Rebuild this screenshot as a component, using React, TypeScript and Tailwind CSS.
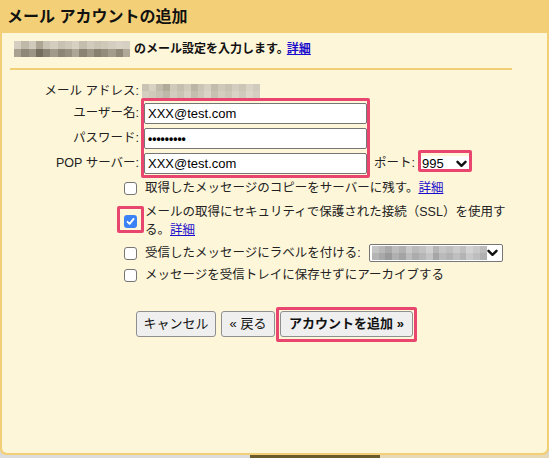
import React from 'react';

const FONT = { fontFamily: '"Liberation Sans", "Noto Sans CJK JP", sans-serif' };

// pixelated (mosaic) placeholder for redacted text
const Mosaic: React.FC<{ top: string[]; bottom: string[]; cell?: number; className?: string }> = ({
  top,
  bottom,
  cell = 8,
  className = '',
}) => (
  <div className={`flex flex-col ${className}`}>
    {[top, bottom].map((row, r) => (
      <div key={r} className="flex">
        {row.map((c, i) => (
          <span key={i} style={{ background: c, width: cell, height: cell }} />
        ))}
      </div>
    ))}
  </div>
);

const Chevron: React.FC = () => (
  <svg width="11" height="8" viewBox="0 0 11 8" className="shrink-0">
    <polyline points="1.5,1.8 5.5,5.8 9.5,1.8" fill="none" stroke="#111" strokeWidth="2.4" strokeLinecap="round" strokeLinejoin="round" />
  </svg>
);

const Box: React.FC<{ checked?: boolean }> = ({ checked }) =>
  checked ? (
    <span className="flex h-[13px] w-[13px] shrink-0 items-center justify-center rounded-[3px] bg-[#3b82f6]">
      <svg width="9" height="9" viewBox="0 0 9 9">
        <polyline points="1.5,4.8 3.6,6.9 7.6,1.9" fill="none" stroke="#fff" strokeWidth="1.8" strokeLinecap="round" strokeLinejoin="round" />
      </svg>
    </span>
  ) : (
    <span className="h-[13px] w-[13px] shrink-0 rounded-[3px] border border-[#767676] bg-white" />
  );

const Field: React.FC<{ value: string; small?: boolean }> = ({ value, small }) => (
  <div className="flex h-[21px] w-[223px] items-center rounded-[2px] border border-[#767676] bg-white pl-[3px] text-[13px] text-black">
    {small ? <span className="text-[12px] font-bold">{value}</span> : value}
  </div>
);

const Link: React.FC = () => <a className="text-[#1a0dcd] underline">詳細</a>;

export default function App() {
  return (
    <div className="relative h-[458px] w-[549px] overflow-hidden bg-[#d9d9d9] text-[#222]" style={FONT}>
      <div className="flex h-[455px] flex-col rounded-b-[6px] bg-[#f3d077] px-[2px] pb-[2px]">
        <div className="flex h-[33px] shrink-0 items-center pl-[5px] pt-[1px] text-[16px] font-bold text-[#111]">
          メール アカウントの追加
        </div>

        <div className="flex-1 rounded-b-[5px] bg-[#fef6d9]">
          <div className="mt-[8px] flex h-[16px] items-center pl-[12px] text-[12px] font-bold text-[#111]">
            <Mosaic
              className="w-[116px] overflow-hidden"
              top={['#d4cfc0', '#bfb9aa', '#cfcabb', '#aca593', '#c8c3b3', '#d2cdbe', '#c6c1b1', '#cdc8b9', '#d6d1c2', '#c3bead', '#d0cbbc', '#c9c4b4', '#cdc8b8', '#d3cebf', '#d8d3c4', '#d5d0c1']}
              bottom={['#a9a292', '#8f8878', '#9c9585', '#756e5e', '#8b8474', '#a19a8a', '#8d8676', '#979080', '#ada696', '#8a8373', '#9d9686', '#877f70', '#938c7c', '#a39c8c', '#8f8878', '#b0a999']}
            />
            <span className="ml-[4px]">のメール設定を入力します。</span>
            <span className="ml-[-2px]">
              <Link />
            </span>
          </div>
          <div className="ml-[8px] mt-[11px] h-[2px] w-[502px] bg-[#f1cf74]" />

          <div className="mt-[12px] text-[12.5px]">
            <div className="flex h-[18px] items-center">
              <div className="w-[138px] pr-[1px] text-right">メール アドレス:</div>
              <Mosaic
                className="ml-[2px] w-[118px] overflow-hidden"
                cell={7}
                top={['#c9c3b3', '#d7d2c4', '#c1bbab', '#b0aa99', '#cfcaba', '#c4bfaf', '#d0cbbb', '#bbb5a5', '#cac5b5', '#d5d0c1', '#c1bcac', '#cec9b9', '#c7c2b2', '#d2cdbe', '#cbc6b6', '#d8d3c4', '#d0cbbc']}
                bottom={['#d4cfc0', '#cfcaba', '#c7c2b3', '#bdb8a8', '#d2cdbe', '#c9c4b4', '#d6d1c2', '#c3beae', '#cdc8b9', '#d9d4c5', '#c6c1b1', '#d3cebe', '#ccc7b7', '#d8d3c4', '#cfcabb', '#dcd7c8', '#d4cfc0']}
              />
            </div>

            <div className="mt-[3px] flex flex-col gap-[4px]">
              {[
                { label: 'ユーザー名:', value: 'XXX@test.com' },
                { label: 'パスワード:', value: '•••••••••', small: true },
                { label: 'POP サーバー:', value: 'XXX@test.com' },
              ].map((f, i) => (
                <div key={i} className="flex h-[21px] items-center">
                  <div className="w-[138px] pr-[1px] text-right">{f.label}</div>
                  <div className="ml-[4px]">
                    <Field value={f.value} small={f.small} />
                  </div>
                  {i === 2 && (
                    <div className="ml-[7px] flex items-center">
                      <span>ポート:</span>
                      <div className="ml-[6px] flex h-[16px] w-[48px] items-center justify-between bg-white pl-[1px] pr-[2px] text-[13px] text-black">
                        995
                        <Chevron />
                      </div>
                    </div>
                  )}
                </div>
              ))}
            </div>

            <div className="ml-[122px] flex flex-col">
              <div className="mt-[6px] flex h-[16px] items-center gap-[8px]">
                <Box />
                <span>
                  取得したメッセージのコピーをサーバーに残す。<Link />
                </span>
              </div>

              <div className="mt-[7px] flex items-center gap-[8px]">
                <Box checked />
                <span className="leading-[18px]">
                  メールの取得にセキュリティで保護された接続（SSL）を使用す
                  <br />
                  る。<Link />
                </span>
              </div>

              <div className="mt-[5px] flex h-[18px] items-center gap-[8px]">
                <Box />
                <span>受信したメッセージにラベルを付ける:</span>
                <div className="flex h-[18px] w-[134px] items-center justify-between rounded-[2px] border border-[#767676] bg-white pl-[2px] pr-[4px]">
                  <Mosaic
                    className="w-[115px] overflow-hidden"
                    cell={7}
                    top={['#c4c4c4', '#b8b8b8', '#a9a9a9', '#bdbdbd', '#b1b1b1', '#c8c8c8', '#bababa', '#c2c2c2', '#d0d0d0', '#b5b5b5', '#c6c6c6', '#bfbfbf', '#cbcbcb', '#c0c0c0', '#d3d3d3', '#c9c9c9', '#bcbcbc']}
                    bottom={['#b4b4b4', '#a8a8a8', '#9a9a9a', '#b0b0b0', '#a3a3a3', '#bcbcbc', '#acacac', '#b6b6b6', '#c4c4c4', '#a6a6a6', '#bababa', '#b2b2b2', '#bfbfbf', '#b3b3b3', '#c9c9c9', '#bebebe', '#b0b0b0']}
                  />
                  <Chevron />
                </div>
              </div>

              <div className="mt-[5px] flex h-[16px] items-center gap-[8px]">
                <Box />
                <span>メッセージを受信トレイに保存せずにアーカイブする</span>
              </div>
            </div>

            <div className="mt-[28px] flex justify-center gap-[5px] text-[13px]">
              <button className="h-[26px] w-[80px] rounded-[3px] border border-[#8f8f8f] bg-[#efefef] text-[#111]">キャンセル</button>
              <button className="h-[26px] w-[54px] rounded-[3px] border border-[#8f8f8f] bg-[#efefef] text-[#111]">« 戻る</button>
              <button className="h-[26px] w-[133px] rounded-[3px] border border-[#8f8f8f] bg-[#efefef] font-bold text-[#111]">
                アカウントを追加 »
              </button>
            </div>
          </div>
        </div>
      </div>

      {/* page content peeking under the dialog */}
      <div className="flex h-[3px]">
        <div className="w-[250px] bg-[#dcdcdc]" />
        <div className="w-[130px] bg-[#6b5a2e]" />
        <div className="flex-1 bg-[#e6d9b3]" />
      </div>

      {/* pink annotation highlights */}
      <div className="absolute left-[141px] top-[98px] h-[80px] w-[229px] rounded-[2px] border-[3px] border-[#e9466f]" />
      <div className="absolute left-[418px] top-[150px] h-[22px] w-[54px] rounded-[2px] border-[3px] border-[#e9466f]" />
      <div className="absolute left-[117px] top-[206px] h-[27px] w-[27px] rounded-[2px] border-[3px] border-[#e9466f]" />
      <div className="absolute left-[276px] top-[307px] h-[35px] w-[141px] rounded-[2px] border-[3px] border-[#e9466f]" />
    </div>
  );
}
